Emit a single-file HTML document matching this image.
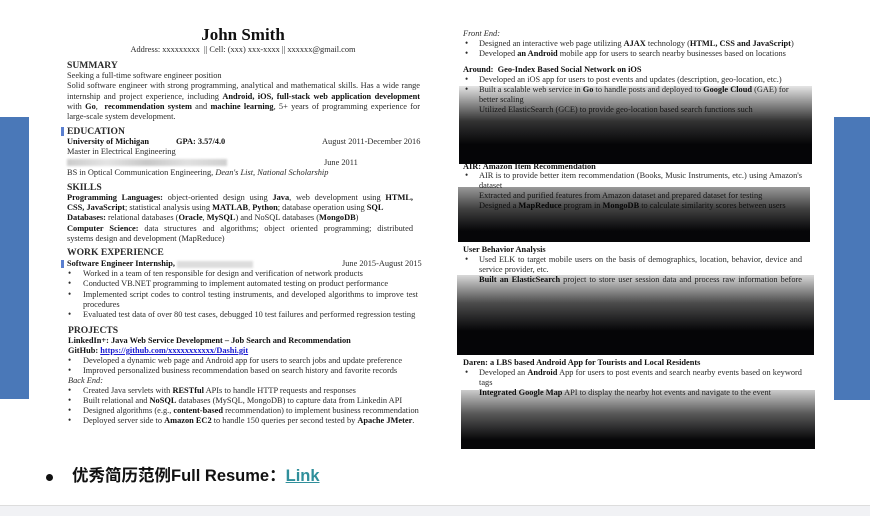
<!DOCTYPE html>
<html><head><meta charset="utf-8"><style>
*{margin:0;padding:0;box-sizing:border-box}
body{width:870px;height:516px;background:#fff;position:relative;overflow:hidden;font-family:"Liberation Serif",serif;color:#2a2a2a}
.l{position:absolute;font-size:8.35px;line-height:11px;white-space:nowrap}
.j{text-align:justify;text-align-last:justify;white-space:normal;height:11px;overflow:hidden}
.h{font-weight:bold;font-size:9.6px}
b{font-weight:bold;color:#111}
.bl{position:absolute;font-size:9px;line-height:11px}
.box{position:absolute;background:linear-gradient(180deg,rgba(0,0,0,.1) 0%,rgba(0,0,0,.8) 45%,#050507 75%);}
.blue{position:absolute;background:#4a78b8}
</style></head><body>
<div class="blue" style="left:0;top:117px;width:29px;height:282px"></div>
<div class="blue" style="left:834px;top:117px;width:36px;height:283px"></div>
<div style="position:absolute;left:0;top:505px;width:870px;height:11px;background:#f1f2f5;border-top:1px solid #ddd"></div>

<div class="l" style="left:0;width:486px;text-align:center;top:25px;font-size:17px;line-height:20px;font-weight:bold;color:#111">John Smith</div>
<div class="l" style="left:0;width:486px;text-align:center;top:44px">Address: xxxxxxxxx &nbsp;|| Cell: (xxx) xxx-xxxx || xxxxxx@gmail.com</div>

<div class="l h" style="left:67px;top:60px">SUMMARY</div>
<div class="l" style="left:67px;top:70px">Seeking a full-time software engineer position</div>
<div class="l j" style="left:67px;width:353px;top:80px">Solid software engineer with strong programming, analytical and mathematical skills. Has a wide range of</div>
<div class="l j" style="left:67px;width:353px;top:91px">internship and project experience, including <b>Android, iOS, full-stack web application development</b></div>
<div class="l j" style="left:67px;width:353px;top:101px">with <b>Go</b>, &nbsp;<b>recommendation system</b> and <b>machine learning</b>, 5+ years of programming experience for</div>
<div class="l" style="left:67px;top:111px">large-scale system development.</div>

<div style="position:absolute;left:61px;top:127px;width:3px;height:9px;background:#5a7fd0"></div>
<div class="l h" style="left:67px;top:126px">EDUCATION</div>
<div class="l" style="left:67px;top:136px"><b>University of Michigan</b></div>
<div class="l" style="left:176px;top:136px"><b>GPA: 3.57/4.0</b></div>
<div class="l" style="left:322px;top:136px">August 2011-December 2016</div>
<div class="l" style="left:67px;top:146px">Master in Electrical Engineering</div>
<div style="position:absolute;left:67px;top:159px;width:160px;height:7px;background:linear-gradient(90deg,#ccc,#e4e4e4,#c8c8c8,#e0e0e0,#d0d0d0);filter:blur(1px)"></div>
<div class="l" style="left:324px;top:157px">June 2011</div>
<div class="l" style="left:67px;top:167px">BS in Optical Communication Engineering, <i>Dean's List, National Scholarship</i></div>

<div class="l h" style="left:67px;top:182px">SKILLS</div>
<div class="l j" style="left:67px;width:346px;top:192px"><b>Programming Languages:</b> object-oriented design using <b>Java</b>, web development using <b>HTML,</b></div>
<div class="l" style="left:67px;top:202px"><b>CSS, JavaScript</b>; statistical analysis using <b>MATLAB</b>, <b>Python</b>; database operation using <b>SQL</b></div>
<div class="l" style="left:67px;top:212px"><b>Databases:</b> relational databases (<b>Oracle</b>, <b>MySQL</b>) and NoSQL databases (<b>MongoDB</b>)</div>
<div class="l j" style="left:67px;width:346px;top:223px"><b>Computer Science:</b> data structures and algorithms; object oriented programming; distributed</div>
<div class="l" style="left:67px;top:233px">systems design and development (MapReduce)</div>

<div class="l h" style="left:67px;top:247px">WORK EXPERIENCE</div>
<div style="position:absolute;left:61px;top:260px;width:3px;height:8px;background:#5a7fd0"></div>
<div class="l" style="left:67px;top:258px"><b>Software Engineer Internship,</b></div>
<div style="position:absolute;left:177px;top:261px;width:76px;height:7px;background:#ddd;filter:blur(1px)"></div>
<div class="l" style="left:342px;top:258px">June 2015-August 2015</div>
<div class="bl" style="left:68px;top:268px">•</div><div class="l" style="left:83px;top:268px">Worked in a team of ten responsible for design and verification of network products</div>
<div class="bl" style="left:68px;top:278px">•</div><div class="l" style="left:83px;top:278px">Conducted VB.NET programming to implement automated testing on product performance</div>
<div class="bl" style="left:68px;top:289px">•</div><div class="l j" style="left:83px;width:335px;top:289px">Implemented script codes to control testing instruments, and developed algorithms to improve test</div>
<div class="l" style="left:83px;top:299px">procedures</div>
<div class="bl" style="left:68px;top:309px">•</div><div class="l" style="left:83px;top:309px">Evaluated test data of over 80 test cases, debugged 10 test failures and performed regression testing</div>

<div class="l h" style="left:68px;top:325px">PROJECTS</div>
<div class="l" style="left:68px;top:335px"><b>LinkedIn+: Java Web Service Development – Job Search and Recommendation</b></div>
<div class="l" style="left:68px;top:345px"><b>GitHub: <span style="color:#1a1ad0;text-decoration:underline">https://github.com/xxxxxxxxxxx/Dashi.git</span></b></div>
<div class="bl" style="left:68px;top:355px">•</div><div class="l" style="left:83px;top:355px">Developed a dynamic web page and Android app for users to search jobs and update preference</div>
<div class="bl" style="left:68px;top:365px">•</div><div class="l" style="left:83px;top:365px">Improved personalized business recommendation based on search history and favorite records</div>
<div class="l" style="left:68px;top:375px"><i>Back End:</i></div>
<div class="bl" style="left:68px;top:385px">•</div><div class="l" style="left:83px;top:385px">Created Java servlets with <b>RESTful</b> APIs to handle HTTP requests and responses</div>
<div class="bl" style="left:68px;top:395px">•</div><div class="l" style="left:83px;top:395px">Built relational and <b>NoSQL</b> databases (MySQL, MongoDB) to capture data from Linkedin API</div>
<div class="bl" style="left:68px;top:405px">•</div><div class="l" style="left:83px;top:405px">Designed algorithms (e.g., <b>content-based</b> recommendation) to implement business recommendation</div>
<div class="bl" style="left:68px;top:415px">•</div><div class="l" style="left:83px;top:415px">Deployed server side to <b>Amazon EC2</b> to handle 150 queries per second tested by <b>Apache JMeter</b>.</div>

<div style="position:absolute;left:46px;top:474px;width:7px;height:7px;border-radius:50%;background:#111"></div>
<div style="position:absolute;left:72px;top:466px;font-family:'Liberation Sans','Noto Sans CJK SC',sans-serif;font-weight:bold;font-size:16.5px;line-height:20px;color:#111;white-space:nowrap">优秀简历范例Full Resume：<span style="color:#2f8f9b;text-decoration:underline">Link</span></div>

<!-- right column -->
<div class="l" style="left:463px;top:28px"><i>Front End:</i></div>
<div class="bl" style="left:465px;top:38px">•</div><div class="l" style="left:479px;top:38px">Designed an interactive web page utilizing <b>AJAX</b> technology (<b>HTML, CSS and JavaScript</b>)</div>
<div class="bl" style="left:465px;top:48px">•</div><div class="l" style="left:479px;top:48px">Developed <b>an Android</b> mobile app for users to search nearby businesses based on locations</div>
<div class="l" style="left:463px;top:64px"><b>Around: &nbsp;Geo-Index Based Social Network on iOS</b></div>
<div class="bl" style="left:465px;top:74px">•</div><div class="l" style="left:479px;top:74px">Developed an iOS app for users to post events and updates (description, geo-location, etc.)</div>
<div class="bl" style="left:465px;top:84px">•</div><div class="l" style="left:479px;top:84px">Built a scalable web service in <b>Go</b> to handle posts and deployed to <b>Google Cloud</b> (GAE) for</div>
<div class="l" style="left:479px;top:94px">better scaling</div>
<div class="l" style="left:479px;top:104px">Utilized ElasticSearch (GCE) to provide geo-location based search functions such</div>
<div class="box" style="left:459px;top:86px;width:353px;height:78px"></div>

<div class="l" style="left:463px;top:161px"><b>AIR: Amazon Item Recommendation</b></div>
<div class="bl" style="left:465px;top:170px">•</div><div class="l j" style="left:479px;width:323px;top:170px">AIR is to provide better item recommendation (Books, Music Instruments, etc.) using Amazon's</div>
<div class="l" style="left:479px;top:180px">dataset</div>
<div class="l" style="left:479px;top:190px">Extracted and purified features from Amazon dataset and prepared dataset for testing</div>
<div class="l" style="left:479px;top:200px">Designed a <b>MapReduce</b> program in <b>MongoDB</b> to calculate similarity scores between users</div>
<div class="box" style="left:458px;top:187px;width:352px;height:55px;background:linear-gradient(180deg,rgba(0,0,0,.4),rgba(0,0,0,.75) 40%,#060608 80%)"></div>

<div class="l" style="left:463px;top:244px"><b>User Behavior Analysis</b></div>
<div class="bl" style="left:465px;top:254px">•</div><div class="l j" style="left:479px;width:323px;top:254px">Used ELK to target mobile users on the basis of demographics, location, behavior, device and</div>
<div class="l" style="left:479px;top:264px">service provider, etc.</div>
<div class="l j" style="left:479px;width:323px;top:274px"><b>Built an ElasticSearch</b> project to store user session data and process raw information before</div>
<div class="box" style="left:457px;top:275px;width:357px;height:80px;background:linear-gradient(180deg,rgba(0,0,0,.15),rgba(0,0,0,.7) 35%,#050507 70%)"></div>

<div class="l" style="left:463px;top:357px"><b>Daren: a LBS based Android App for Tourists and Local Residents</b></div>
<div class="bl" style="left:465px;top:367px">•</div><div class="l j" style="left:479px;width:323px;top:367px">Developed an <b>Android</b> App for users to post events and search nearby events based on keyword</div>
<div class="l" style="left:479px;top:377px">tags</div>
<div class="l" style="left:479px;top:387px"><b>Integrated Google Map</b> API to display the nearby hot events and navigate to the event</div>
<div class="box" style="left:461px;top:390px;width:354px;height:59px;background:linear-gradient(180deg,rgba(0,0,0,.2),rgba(0,0,0,.65) 40%,#060608 85%)"></div>
</body></html>
